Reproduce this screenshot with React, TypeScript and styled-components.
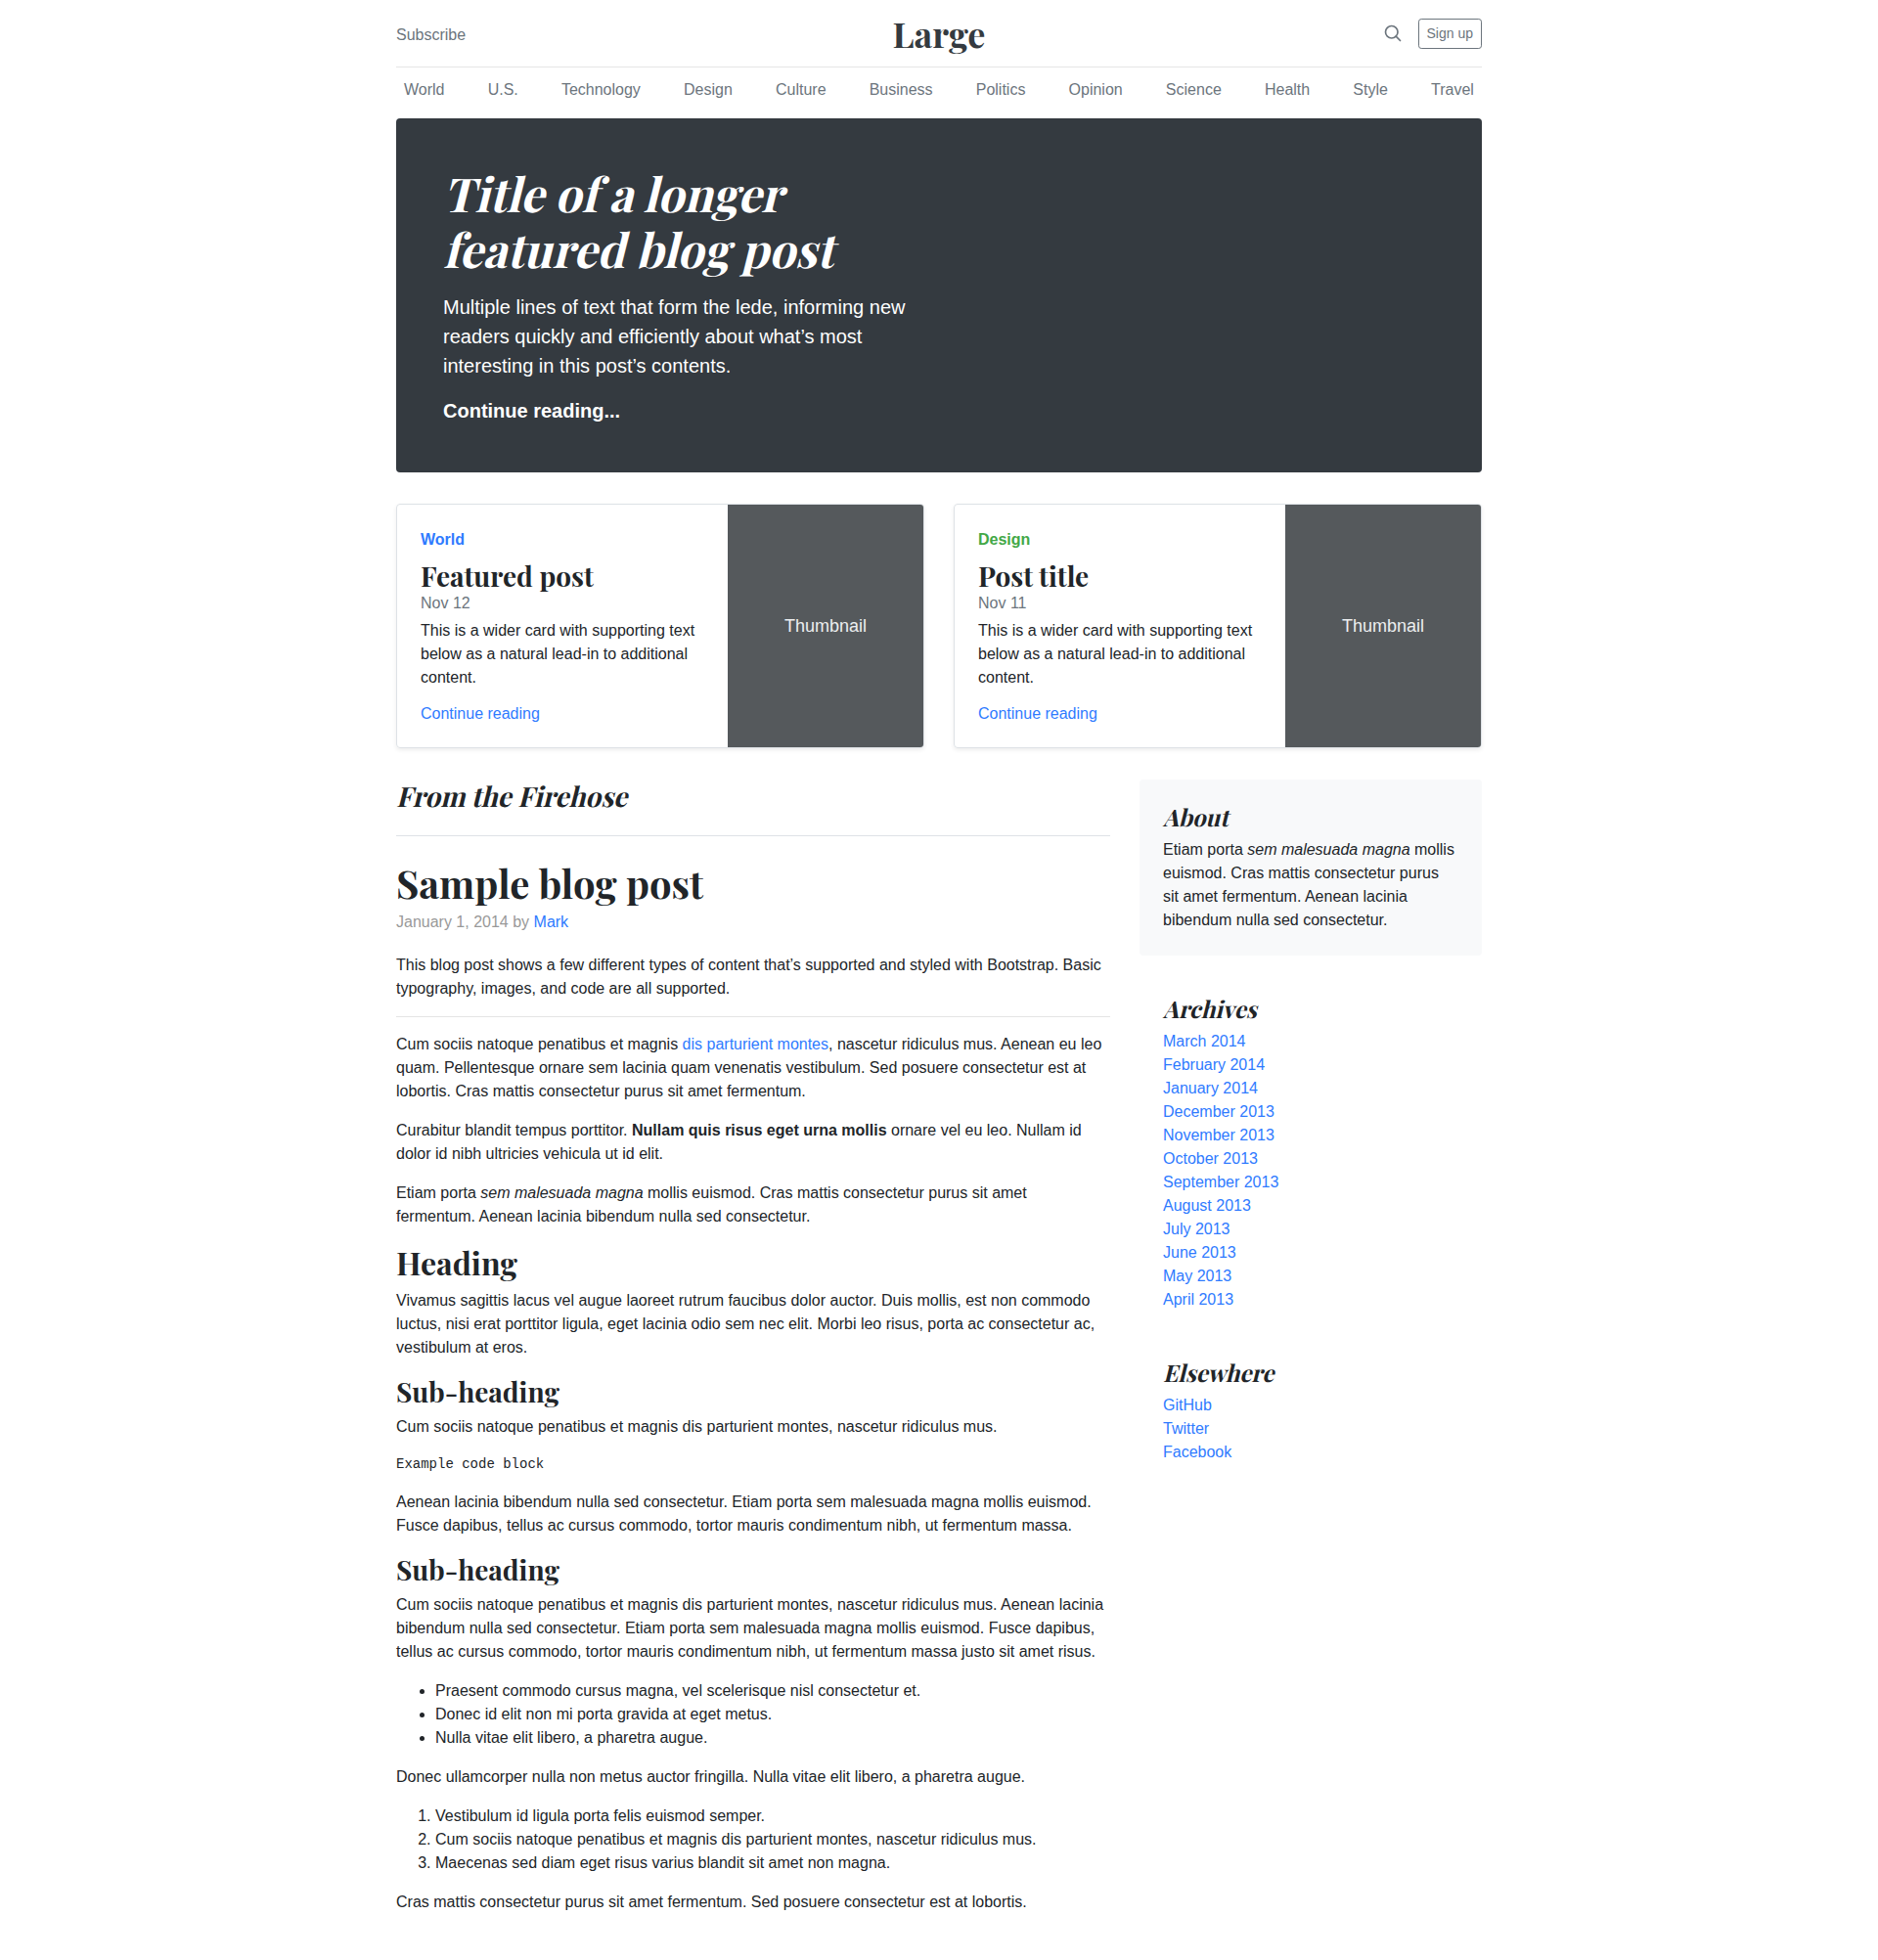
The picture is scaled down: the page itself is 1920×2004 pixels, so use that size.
import React from "react";
import styled, { createGlobalStyle, css } from "styled-components";

const GlobalStyle = createGlobalStyle`
  *, *::before, *::after { box-sizing: border-box; }
  body {
    margin: 0;
    background: #fff;
    color: #212529;
    font: 400 16px/1.5 "Liberation Sans", Arial, sans-serif;
  }
  p { margin: 0 0 16px; }
  a { color: #2f7bff; text-decoration: none; }
`;

const serif = css`
  font-family: "Playfair Display", "Liberation Serif", "Times New Roman", serif;
  font-weight: 700;
`;

/* Slants the upright cut of the serif around its baseline. */
const Slanted = styled.span`
  display: block;
  transform: skewX(-14deg);
  transform-origin: 0 85%;
`;

const Container = styled.div`
  width: 1110px;
  margin: 0 auto;
`;

const Header = styled.header`
  display: grid;
  grid-template-columns: repeat(3, 1fr);
  align-items: center;
  height: 69px;
  border-bottom: 1px solid #e5e5e5;
  line-height: 1;
`;

const Subscribe = styled.a`
  padding-top: 4px;
  color: #6c757d;
`;

const Logo = styled.a`
  ${serif}
  color: #343a40;
  font-size: 36px;
  line-height: 36px;
  text-align: center;
`;

const Actions = styled.div`
  display: flex;
  justify-content: flex-end;
  align-items: center;
  gap: 16px;
  color: #6c757d;
`;

const SignUp = styled.a`
  padding: 4px 8px;
  border: 1px solid #6c757d;
  border-radius: 3.2px;
  color: #6c757d;
  font-size: 14px;
  line-height: 21px;
`;

const Nav = styled.nav`
  display: flex;
  justify-content: space-between;
  height: 44px;
  margin-bottom: 8px;
  padding: 3px 0 1px;
`;

const NavLink = styled.a`
  padding: 8px;
  color: #6c757d;
`;

const Hero = styled.section`
  margin-bottom: 32px;
  padding: 48px;
  border-radius: 4px;
  background: #343a40;
  color: #fff;
`;

const HeroBody = styled.div`
  width: 507px;
  font-size: 20px;
`;

const HeroTitle = styled.h1`
  ${serif}
  margin: 0;
  font-size: 48px;
  line-height: 57px;
`;

const Lead = styled.p`
  margin: 16px 0;
`;

const HeroLink = styled.a`
  display: block;
  color: #fff;
  font-weight: 700;
`;

const Cards = styled.section`
  display: grid;
  grid-template-columns: 1fr 1fr;
  gap: 30px;
  margin-bottom: 32px;
`;

const Card = styled.article`
  display: flex;
  height: 250px;
  overflow: hidden;
  border: 1px solid #dee2e6;
  border-radius: 4px;
  box-shadow: 0 2px 4px rgba(0, 0, 0, 0.075);
`;

const CardBody = styled.div`
  display: flex;
  flex: 1;
  flex-direction: column;
  height: 250px;
  padding: 24px;
`;

const Category = styled.strong<{ $color: string }>`
  margin-bottom: 8px;
  color: ${(p) => p.$color};
`;

const CardTitle = styled.h3`
  ${serif}
  margin: 0;
  font-size: 28px;
  line-height: 33px;
`;

const CardDate = styled.div`
  margin-bottom: 4px;
  color: #6c757d;
`;

const CardText = styled.p`
  margin-bottom: auto;
`;

const Thumbnail = styled.div`
  display: flex;
  flex: 0 0 200px;
  align-items: center;
  justify-content: center;
  background: #55595c;
  color: #eceeef;
  font-size: 18px;
`;

const Columns = styled.div`
  display: grid;
  grid-template-columns: 730px 350px;
  gap: 30px;
  align-items: start;
`;

const SectionTitle = styled.h3`
  ${serif}
  margin: 0 0 24px;
  padding-bottom: 24px;
  border-bottom: 1px solid #dee2e6;
  font-size: 28px;
  line-height: 33px;
`;

const PostTitle = styled.h2`
  ${serif}
  margin: 0 0 4px;
  font-size: 40px;
  line-height: 48px;
`;

const PostMeta = styled.p`
  margin-bottom: 20px;
  color: #999;
`;

const Rule = styled.hr`
  margin: 16px 0;
  border: 0;
  border-top: 1px solid rgba(0, 0, 0, 0.1);
`;

const Heading = styled.h2`
  ${serif}
  margin: 0 0 8px;
  font-size: 32px;
  line-height: 38px;
`;

const SubHeading = styled.h3`
  ${serif}
  margin: 0 0 8px;
  font-size: 28px;
  line-height: 33px;
`;

const Code = styled.pre`
  margin: 0 0 16px;
  font: 14px/21px "Liberation Mono", monospace;
`;

const listStyle = css`
  margin: 0 0 16px;
  padding-left: 40px;
`;

const Bullets = styled.ul`
  ${listStyle}
`;

const Numbers = styled.ol`
  ${listStyle}
`;

const Panel = styled.section<{ $filled?: boolean }>`
  padding: 24px;
  border-radius: 4px;
  ${(p) => p.$filled && "margin-bottom: 16px; background: #f8f9fa;"}
`;

const PanelTitle = styled.h4`
  ${serif}
  margin: 0 0 8px;
  font-size: 24px;
  line-height: 28px;
`;

const PanelText = styled.p`
  margin: 0;
`;

const Links = styled.ol`
  margin: 0;
  padding: 0;
  list-style: none;
`;

const sections = ["World", "U.S.", "Technology", "Design", "Culture", "Business", "Politics", "Opinion", "Science", "Health", "Style", "Travel"];

const cards = [
  { category: "World", color: "#2f7bff", title: "Featured post", date: "Nov 12" },
  { category: "Design", color: "#43a847", title: "Post title", date: "Nov 11" },
];

const archives = [
  "March 2014", "February 2014", "January 2014", "December 2013", "November 2013", "October 2013",
  "September 2013", "August 2013", "July 2013", "June 2013", "May 2013", "April 2013",
];

const SearchIcon = () => (
  <svg width="20" height="20" viewBox="0 0 24 24" fill="none" stroke="currentColor" strokeWidth="2" strokeLinecap="round" strokeLinejoin="round">
    <circle cx="10.5" cy="10.5" r="7.5" />
    <path d="M21 21l-5.2-5.2" />
  </svg>
);

const LinkPanel = ({ title, items }: { title: string; items: string[] }) => (
  <Panel>
    <PanelTitle><Slanted>{title}</Slanted></PanelTitle>
    <Links>
      {items.map((item) => (
        <li key={item}><a href="#">{item}</a></li>
      ))}
    </Links>
  </Panel>
);

export default function App() {
  return (
    <Container>
      <GlobalStyle />
      <Header>
        <Subscribe href="#">Subscribe</Subscribe>
        <Logo href="#">Large</Logo>
        <Actions>
          <SearchIcon />
          <SignUp href="#">Sign up</SignUp>
        </Actions>
      </Header>
      <Nav>
        {sections.map((name) => <NavLink href="#" key={name}>{name}</NavLink>)}
      </Nav>

      <Hero>
        <HeroBody>
          <HeroTitle>
            <Slanted>Title of a longer</Slanted>
            <Slanted>featured blog post</Slanted>
          </HeroTitle>
          <Lead>Multiple lines of text that form the lede, informing new readers quickly and efficiently about what’s most interesting in this post’s contents.</Lead>
          <HeroLink href="#">Continue reading...</HeroLink>
        </HeroBody>
      </Hero>

      <Cards>
        {cards.map((card) => (
          <Card key={card.title}>
            <CardBody>
              <Category $color={card.color}>{card.category}</Category>
              <CardTitle>{card.title}</CardTitle>
              <CardDate>{card.date}</CardDate>
              <CardText>This is a wider card with supporting text below as a natural lead-in to additional content.</CardText>
              <a href="#">Continue reading</a>
            </CardBody>
            <Thumbnail>Thumbnail</Thumbnail>
          </Card>
        ))}
      </Cards>

      <Columns>
        <main>
          <SectionTitle><Slanted>From the Firehose</Slanted></SectionTitle>
          <article>
            <PostTitle>Sample blog post</PostTitle>
            <PostMeta>January 1, 2014 by <a href="#">Mark</a></PostMeta>
            <p>This blog post shows a few different types of content that’s supported and styled with Bootstrap. Basic typography, images, and code are all supported.</p>
            <Rule />
            <p>Cum sociis natoque penatibus et magnis <a href="#">dis parturient montes</a>, nascetur ridiculus mus. Aenean eu leo quam. Pellentesque ornare sem lacinia quam venenatis vestibulum. Sed posuere consectetur est at lobortis. Cras mattis consectetur purus sit amet fermentum.</p>
            <p>Curabitur blandit tempus porttitor. <strong>Nullam quis risus eget urna mollis</strong> ornare vel eu leo. Nullam id dolor id nibh ultricies vehicula ut id elit.</p>
            <p>Etiam porta <em>sem malesuada magna</em> mollis euismod. Cras mattis consectetur purus sit amet fermentum. Aenean lacinia bibendum nulla sed consectetur.</p>
            <Heading>Heading</Heading>
            <p>Vivamus sagittis lacus vel augue laoreet rutrum faucibus dolor auctor. Duis mollis, est non commodo luctus, nisi erat porttitor ligula, eget lacinia odio sem nec elit. Morbi leo risus, porta ac consectetur ac, vestibulum at eros.</p>
            <SubHeading>Sub-heading</SubHeading>
            <p>Cum sociis natoque penatibus et magnis dis parturient montes, nascetur ridiculus mus.</p>
            <Code>Example code block</Code>
            <p>Aenean lacinia bibendum nulla sed consectetur. Etiam porta sem malesuada magna mollis euismod. Fusce dapibus, tellus ac cursus commodo, tortor mauris condimentum nibh, ut fermentum massa.</p>
            <SubHeading>Sub-heading</SubHeading>
            <p>Cum sociis natoque penatibus et magnis dis parturient montes, nascetur ridiculus mus. Aenean lacinia bibendum nulla sed consectetur. Etiam porta sem malesuada magna mollis euismod. Fusce dapibus, tellus ac cursus commodo, tortor mauris condimentum nibh, ut fermentum massa justo sit amet risus.</p>
            <Bullets>
              <li>Praesent commodo cursus magna, vel scelerisque nisl consectetur et.</li>
              <li>Donec id elit non mi porta gravida at eget metus.</li>
              <li>Nulla vitae elit libero, a pharetra augue.</li>
            </Bullets>
            <p>Donec ullamcorper nulla non metus auctor fringilla. Nulla vitae elit libero, a pharetra augue.</p>
            <Numbers>
              <li>Vestibulum id ligula porta felis euismod semper.</li>
              <li>Cum sociis natoque penatibus et magnis dis parturient montes, nascetur ridiculus mus.</li>
              <li>Maecenas sed diam eget risus varius blandit sit amet non magna.</li>
            </Numbers>
            <p>Cras mattis consectetur purus sit amet fermentum. Sed posuere consectetur est at lobortis.</p>
          </article>
        </main>
        <aside>
          <Panel $filled>
            <PanelTitle><Slanted>About</Slanted></PanelTitle>
            <PanelText>Etiam porta <em>sem malesuada magna</em> mollis euismod. Cras mattis consectetur purus sit amet fermentum. Aenean lacinia bibendum nulla sed consectetur.</PanelText>
          </Panel>
          <LinkPanel title="Archives" items={archives} />
          <LinkPanel title="Elsewhere" items={["GitHub", "Twitter", "Facebook"]} />
        </aside>
      </Columns>
    </Container>
  );
}
